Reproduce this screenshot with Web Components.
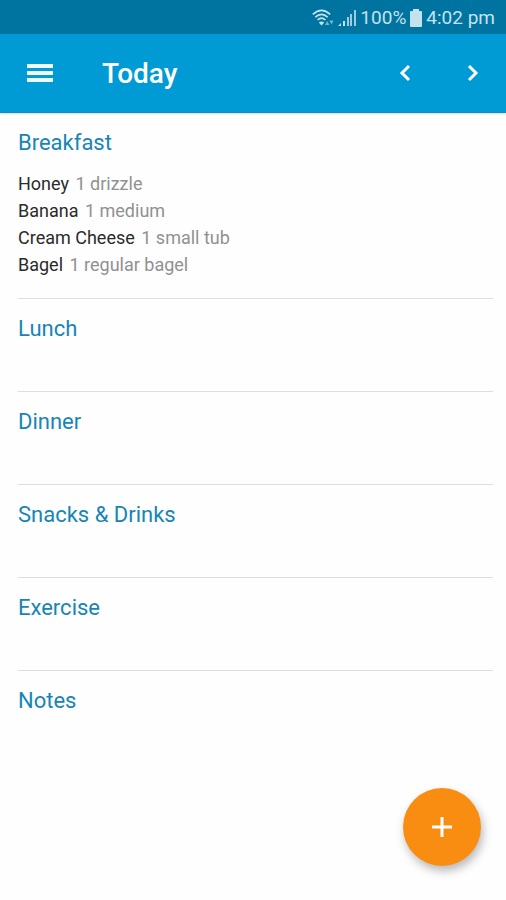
<!DOCTYPE html>
<html lang="en">
<head>
<meta charset="utf-8">
<meta name="viewport" content="width=device-width, initial-scale=1">
<title>Today</title>
<style>
    body {
        margin: 0;
        background: #fefefe;
        font-family: Roboto, "Liberation Sans", sans-serif;
    }
</style>
</head>
<body>
<diary-app></diary-app>

<template id="status-bar-template">
    <style>
        :host {
            display: flex;
            align-items: center;
            justify-content: flex-end;
            gap: 4px;
            height: 34px;
            padding: 2px 11px 0 0;
            box-sizing: border-box;
            background: #0074a0;
            color: #c3e2ed;
            font-size: 19px;
            line-height: 24px;
        }
        svg { display: block; }
    </style>
    <svg width="22" height="18" viewBox="0 0 22 18" fill="none" stroke="#c3e2ed" stroke-width="1.7" aria-hidden="true">
        <path d="M.8 5.400Q9.500-2.600 18.200 5.400M3.300 8.200Q9.500 2.400 15.700 8.200M5.600 11Q9.500 7.200 13.400 11"/>
        <path d="M6.800 13.600q2.700-2.400 5.400 0L9.500 16.500z" fill="#c3e2ed" stroke="none"/>
        <path d="M13 16l2.200-4 2.200 4zM17.300 11.500l2.200 4 2.200-4z" fill="#6db6cf" stroke="none"/>
    </svg>
    <svg width="18" height="18" viewBox="0 0 18 18" fill="#c3e2ed" aria-hidden="true">
        <path d="M0 17l3-3v3zM5 12h2v5H5z"/>
        <path d="M9 8h2v9H9zM12 5h2v12h-2zM16 1h2v16h-2z" opacity=".8"/>
    </svg>
    <span id="level"></span>
    <svg width="12" height="18" viewBox="0 0 12 18" fill="#c3e2ed" aria-hidden="true">
        <path d="M3 0h6v2h2q1 0 1 1v14q0 1-1 1H1q-1 0-1-1V3q0-1 1-1h2z"/>
    </svg>
    <span id="time"></span>
</template>

<template id="icon-button-template">
    <style>
        :host { display: block; }
        button {
            display: flex;
            align-items: center;
            justify-content: center;
            width: 48px;
            height: 48px;
            padding: 0;
            border: 0;
            border-radius: 50%;
            background: none;
            color: #fff;
            cursor: pointer;
        }
        :host([raised]) button {
            width: 78px;
            height: 78px;
            background: #f98d12;
            box-shadow: 2px 5px 10px rgba(0, 0, 0, .28);
        }
    </style>
    <button type="button"><slot></slot></button>
</template>

<template id="app-bar-template">
    <style>
        :host {
            display: flex;
            align-items: center;
            height: 79px;
            padding: 0 9px 0 16px;
            box-sizing: border-box;
            background: #009bd5;
            color: #fff;
            border-bottom: 1px solid #0b90c3;
            box-shadow: 0 1px 2px rgba(0, 0, 0, .15);
        }
        h1 {
            flex: 1;
            margin: 0 0 0 38px;
            padding-top: 2px;
            font-size: 28px;
            font-weight: 500;
            line-height: 36px;
        }
        nav { display: flex; gap: 20px; }
        svg { display: block; }
    </style>
    <icon-button label="Menu">
        <svg width="26" height="20" viewBox="0 0 26 20" fill="#f0f9fd"><path d="M0 1h26v4H0zM0 8h26v4H0zM0 15h26v4H0z"/></svg>
    </icon-button>
    <h1><slot></slot></h1>
    <nav>
        <icon-button label="Previous day">
            <svg width="12" height="18" viewBox="0 0 12 18" fill="none" stroke="#fff" stroke-width="3"><path d="M10 2L3 9l7 7"/></svg>
        </icon-button>
        <icon-button label="Next day">
            <svg width="12" height="18" viewBox="0 0 12 18" fill="none" stroke="#fff" stroke-width="3"><path d="M2 2l7 7-7 7"/></svg>
        </icon-button>
    </nav>
</template>

<template id="diary-section-template">
    <style>
        :host {
            display: block;
            min-height: 93px;
            margin: 0 13px 0 18px;
            padding: 17px 0 20px;
            box-sizing: border-box;
            border-bottom: 1px solid #dedede;
        }
        :host(:last-of-type) { border-bottom: 0; }
        h2 {
            margin: 0;
            color: #1785b5;
            font-size: 22px;
            font-weight: 400;
            line-height: 26px;
        }
        ul {
            margin: 14px 0 0;
            padding: 0;
            list-style: none;
        }
        ul:empty { display: none; }
        li {
            color: #2b2b2b;
            font-size: 18px;
            line-height: 27px;
        }
        li span { margin-left: 2px; color: #919191; }
    </style>
    <h2></h2>
    <ul></ul>
</template>

<template id="diary-app-template">
    <style>
        :host {
            display: flex;
            flex-direction: column;
            min-height: 100vh;
        }
        main { flex: 1; }
        .add {
            position: fixed;
            right: 25px;
            bottom: 34px;
        }
        svg { display: block; }
    </style>
    <status-bar level="100%" time="4:02 pm"></status-bar>
    <app-bar>Today</app-bar>
    <main></main>
    <icon-button class="add" label="Add entry" raised>
        <svg width="20" height="20" viewBox="0 0 20 20" fill="none" stroke="#fff" stroke-width="3"><path d="M10 0v20M0 10h20"/></svg>
    </icon-button>
</template>

<script>
    const sections = [
        {
            heading: 'Breakfast',
            items: [
                ['Honey', '1 drizzle'],
                ['Banana', '1 medium'],
                ['Cream Cheese', '1 small tub'],
                ['Bagel', '1 regular bagel']
            ]
        },
        { heading: 'Lunch', items: [] },
        { heading: 'Dinner', items: [] },
        { heading: 'Snacks & Drinks', items: [] },
        { heading: 'Exercise', items: [] },
        { heading: 'Notes', items: [] }
    ];

    class TemplateElement extends HTMLElement {
        constructor() {
            super();
            this.attachShadow({ mode: 'open' });
            const template = document.getElementById(`${this.localName}-template`);
            this.shadowRoot.appendChild(template.content.cloneNode(true));
        }
    }

    class StatusBar extends TemplateElement {
        connectedCallback() {
            this.shadowRoot.getElementById('level').textContent = this.getAttribute('level');
            this.shadowRoot.getElementById('time').textContent = this.getAttribute('time');
        }
    }

    class IconButton extends TemplateElement {
        connectedCallback() {
            this.shadowRoot.querySelector('button').setAttribute('aria-label', this.getAttribute('label'));
        }
    }

    class AppBar extends TemplateElement {}

    class DiarySection extends TemplateElement {
        set data({ heading, items }) {
            this.shadowRoot.querySelector('h2').textContent = heading;
            const list = this.shadowRoot.querySelector('ul');
            items.forEach(([name, amount]) => {
                const item = document.createElement('li');
                const quantity = document.createElement('span');
                quantity.textContent = amount;
                item.append(`${name} `, quantity);
                list.appendChild(item);
            });
        }
    }

    class DiaryApp extends TemplateElement {
        connectedCallback() {
            const main = this.shadowRoot.querySelector('main');
            sections.forEach((data) => {
                const section = document.createElement('diary-section');
                section.data = data;
                main.appendChild(section);
            });
        }
    }

    customElements.define('status-bar', StatusBar);
    customElements.define('icon-button', IconButton);
    customElements.define('app-bar', AppBar);
    customElements.define('diary-section', DiarySection);
    customElements.define('diary-app', DiaryApp);
</script>
</body>
</html>
